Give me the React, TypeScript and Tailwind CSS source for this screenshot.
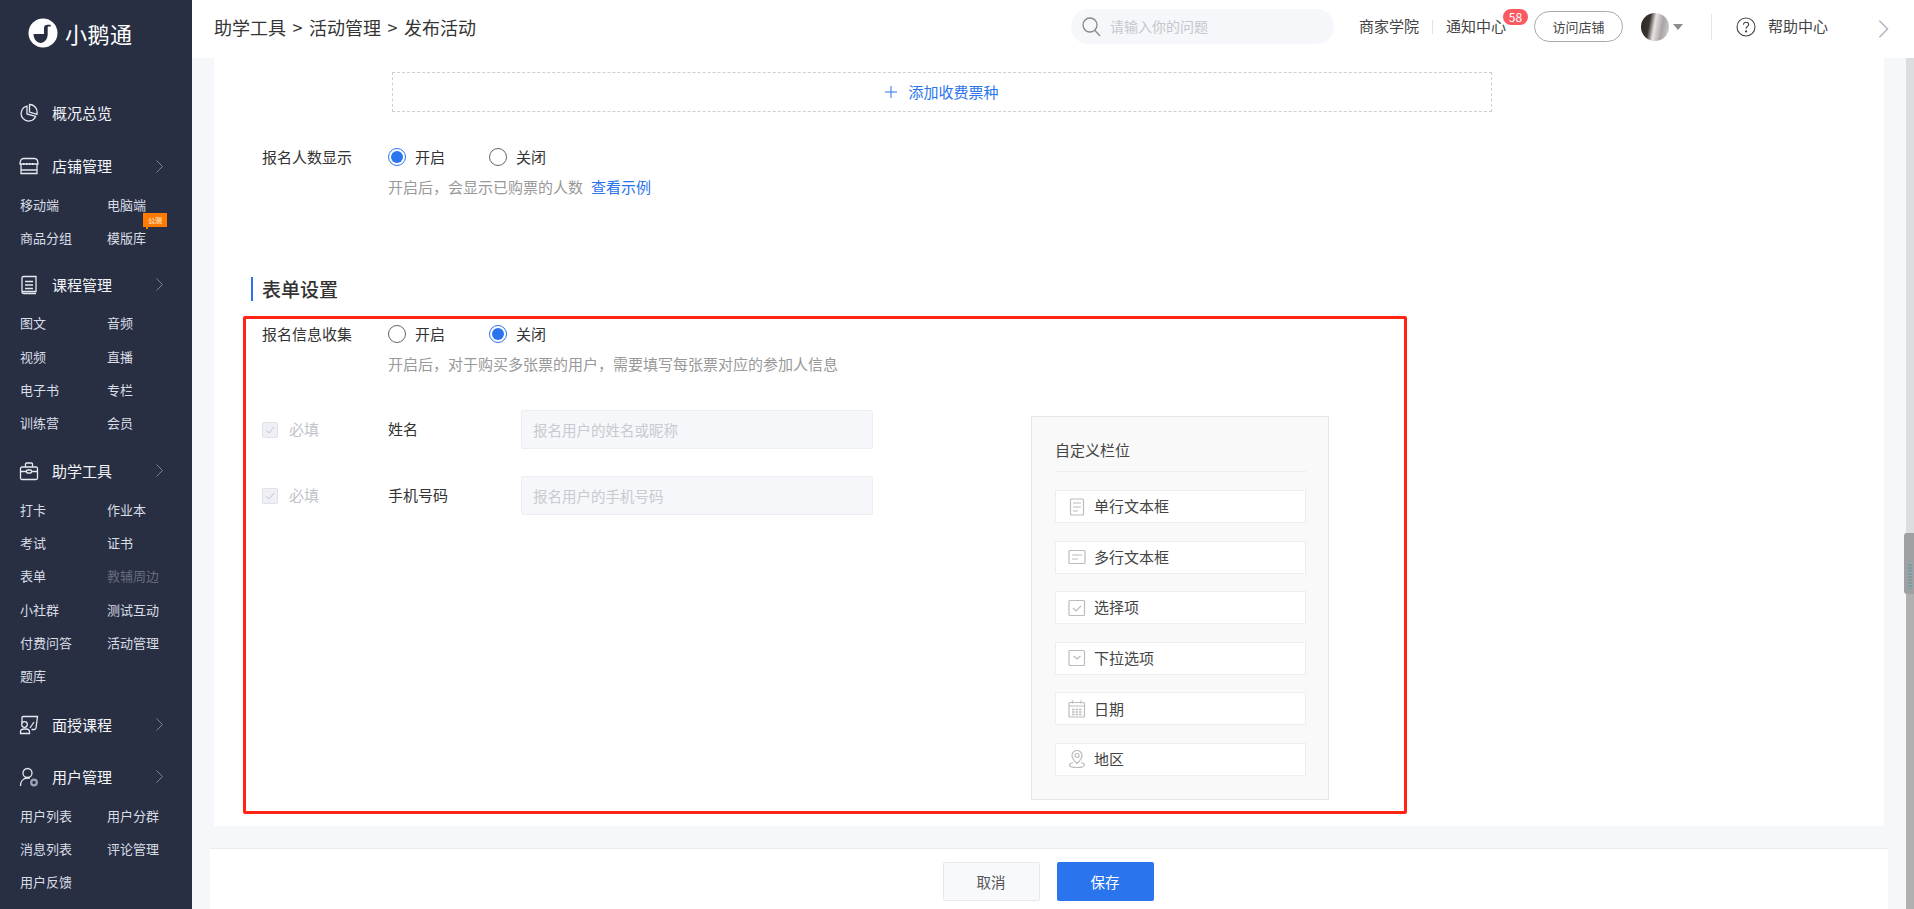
import React from "react";

const BLUE = "#2a75ed";

function Logo() {
  return (
    <svg width="30" height="30" viewBox="0 0 30 30" className="shrink-0">
      <circle cx="15" cy="15" r="14.5" fill="#fff" />
      <path d="M5.500 16H16v-6c0-2 1.500-3.200 3.500-3.200h3.200v1.700h-2c-.6 0-1 .4-1 1V16c0 5.500-3.500 9-7 9s-7.200-3.800-7.200-9z" fill="#282f43" />
    </svg>
  );
}

function NavIcon({ name }: { name: string }) {
  const s = { fill: "none", stroke: "#e6e9ef", strokeWidth: 1.3 } as const;
  return (
    <svg width="20" height="20" viewBox="0 0 20 20" className="shrink-0" {...s}>
      {name === "pie" && (
        <>
          <path d="M8 3.200a7.500 7.500 0 1 0 8.600 10.200L8 11z" />
          <path d="M10.500 1.500a7.600 7.600 0 0 1 7.600 7.800l-.1 2-7.500-2.200z" />
        </>
      )}
      {name === "store" && (
        <>
          <path d="M4.500 2.500h11c2 0 3.500 2 3.500 5.500H1c0-3.500 1.500-5.500 3.500-5.500z" />
          <path d="M2 8v9.500h16V8M2 14h16" />
          <path d="M4 8h12" strokeDasharray="1.500 1.500" strokeWidth="1.800" />
        </>
      )}
      {name === "book" && (
        <>
          <path d="M3 17V3c0-.8.4-1.500 1.500-1.500H17v15H4.500C3.500 16.500 3 17 3 17c0 1 .7 1.500 1.500 1.500H17" />
          <path d="M6 6.500h8M6 10h8M6 13.500h8" />
        </>
      )}
      {name === "case" && (
        <>
          <rect x="1.500" y="6" width="17" height="12.500" rx="1.500" />
          <path d="M6.500 6V3c0-.6.400-1 1-1h5c.6 0 1 .4 1 1v3M1.500 10.500h17" />
          <rect x="7.500" y="9" width="5" height="3" rx="1" fill="#282f43" />
        </>
      )}
      {name === "teach" && (
        <>
          <path d="M3 8V2.500c0-.6.400-1 1-1h14.500L17 13c-.1.900-.8 1.500-1.600 1.500H12.500" />
          <path d="M11 13l4-6" />
          <circle cx="5.500" cy="9.500" r="2.800" />
          <path d="M1.500 18.500v-1.500c0-2 1.500-3 3.500-3h2c2 0 3.500 1 3.500 3v1.500z" />
        </>
      )}
      {name === "user" && (
        <>
          <circle cx="8.500" cy="6" r="4.500" />
          <path d="M1.500 19c0-4.500 2.500-8 7-8 .8 0 1.500.1 2.200.4" />
          <circle cx="15" cy="15.500" r="2.800" strokeWidth="2.200" stroke="#9aa5b8" />
        </>
      )}
    </svg>
  );
}

function Chevron({ className = "", color = "#7d8494", w = 7, h = 13 }: { className?: string; color?: string; w?: number; h?: number }) {
  return (
    <svg width={w} height={h} viewBox="0 0 7 13" className={className} fill="none" stroke={color} strokeWidth="1">
      <path d="M.5.500l6 6-6 6" />
    </svg>
  );
}

type Item = { t: string; dim?: boolean; tag?: boolean };
type Sec = { icon: string; title: string; arrow?: boolean; items?: Item[]; mt: string };

const T = (...a: string[]): Item[] => a.map((t) => ({ t }));

const sections: Sec[] = [
  { icon: "pie", title: "概况总览", mt: "mt-[30px]" },
  {
    icon: "store",
    title: "店铺管理",
    arrow: true,
    mt: "mt-[19px]",
    items: [{ t: "移动端" }, { t: "电脑端" }, { t: "商品分组" }, { t: "模版库", tag: true }],
  },
  { icon: "book", title: "课程管理", arrow: true, mt: "mt-[13px]", items: T("图文", "音频", "视频", "直播", "电子书", "专栏", "训练营", "会员") },
  {
    icon: "case",
    title: "助学工具",
    arrow: true,
    mt: "mt-[14px]",
    items: [
      { t: "打卡" },
      { t: "作业本" },
      { t: "考试" },
      { t: "证书" },
      { t: "表单" },
      { t: "教辅周边", dim: true },
      { t: "小社群" },
      { t: "测试互动" },
      { t: "付费问答" },
      { t: "活动管理" },
      { t: "题库" },
    ],
  },
  { icon: "teach", title: "面授课程", arrow: true, mt: "mt-[15px]" },
  { icon: "user", title: "用户管理", arrow: true, mt: "mt-[18px]", items: T("用户列表", "用户分群", "消息列表", "评论管理", "用户反馈") },
];

function Sidebar() {
  return (
    <aside className="w-[192px] h-full shrink-0 bg-[#282f43] flex flex-col">
      <div className="h-[66px] flex items-center pl-[28px] gap-[7px]">
        <Logo />
        <span className="text-[22px] leading-[30px] text-white tracking-[0.5px]">小鹅通</span>
      </div>
      {sections.map((s) => (
        <section key={s.title} className={s.mt}>
          <div className="h-[34px] flex items-center pl-[19px] pr-[29px]">
            <NavIcon name={s.icon} />
            <span className="ml-[13px] flex-1 text-[15px] leading-[20px] text-[#f2f4f8]">{s.title}</span>
            {s.arrow && <Chevron />}
          </div>
          {s.items && (
            <ul className="mt-[5px] pl-[20px] grid grid-cols-[87px_1fr]">
              {s.items.map((i) => (
                <li key={i.t} className={`relative h-[33.33px] flex items-center text-[13px] leading-[18px] ${i.dim ? "text-[#666c7b]" : "text-[#d9dde5]"}`}>
                  {i.t}
                  {i.tag && (
                    <span className="absolute left-[36px] top-[-8px] w-[24px] h-[14px] bg-[#ff7a00] text-white text-[7px] leading-[14px] text-center">
                      公测
                      <span className="absolute left-[3px] top-[14px] w-[2px] h-[2px] bg-[#ff7a00]" />
                    </span>
                  )}
                </li>
              ))}
            </ul>
          )}
        </section>
      ))}
    </aside>
  );
}

function Header() {
  return (
    <header className="h-[58px] shrink-0 bg-white flex items-center pl-[22px] pb-[5px] text-[#333]">
      <div className="text-[18px] leading-[26px] text-[#353535] whitespace-nowrap w-[857px] [word-spacing:2.500px]">助学工具 &gt; 活动管理 &gt; 发布活动</div>
      <div className="w-[263px] h-[35px] rounded-full bg-[#f5f7fa] flex items-center pl-[11px] gap-[9px] shrink-0">
        <svg width="19" height="20" viewBox="0 0 19 20" fill="none" stroke="#888" strokeWidth="1.300">
          <circle cx="8" cy="8" r="7" />
          <path d="M13 13.500l5 5.500" />
        </svg>
        <span className="text-[14px] text-[#c4c7cd]">请输入你的问题</span>
      </div>
      <span className="ml-[25px] text-[15px] text-[#444] whitespace-nowrap">商家学院</span>
      <span className="ml-[13px] w-px h-[14px] bg-[#e3e3e3]" />
      <div className="relative ml-[13px] text-[15px] text-[#444] whitespace-nowrap">
        通知中心
        <span className="absolute left-[57px] -top-[6px] w-[25px] h-[16px] rounded-full bg-[#fb5a63] text-white text-[12px] leading-[16px] text-center">58</span>
      </div>
      <button className="ml-[28px] w-[89px] h-[31px] rounded-full border border-[#aaa] bg-white text-[13px] text-[#444]">访问店铺</button>
      <span className="ml-[18px] w-[28px] h-[28px] rounded-full bg-[linear-gradient(100deg,#2c2624_0%,#3a322e_30%,#e8e4e2_48%,#a9a3a3_72%,#d8d5d5_100%)]" />
      <svg width="10" height="6" viewBox="0 0 10 6" className="ml-[4px]">
        <path d="M0 0h10L5 6z" fill="#8d8d8d" />
      </svg>
      <span className="ml-[28px] w-px h-[26px] bg-[#e6e6e6]" />
      <svg width="20" height="20" viewBox="0 0 20 20" className="ml-[24px]" fill="none" stroke="#444" strokeWidth="1.100">
        <circle cx="10" cy="10" r="9" />
        <path d="M7.500 7.800c0-1.600 1.100-2.600 2.600-2.600s2.500 1 2.500 2.300c0 1.200-.8 1.700-1.500 2.300-.7.500-1 .9-1 2" />
        <circle cx="10.100" cy="14.400" r=".6" fill="#444" />
      </svg>
      <span className="ml-[12px] text-[15px] text-[#444] whitespace-nowrap">帮助中心</span>
      <Chevron className="ml-[50px] mt-[5px]" color="#b0b4bc" w={11} h={18} />
    </header>
  );
}

function Radio({ on, label, width }: { on: boolean; label: string; width: string }) {
  return (
    <label className={`flex items-center gap-[9px] ${width}`}>
      {on ? (
        <span className="w-[18px] h-[18px] rounded-full border border-[#2a75ed] flex items-center justify-center">
          <span className="w-[12px] h-[12px] rounded-full bg-[#2a75ed]" />
        </span>
      ) : (
        <span className="w-[18px] h-[18px] rounded-full border border-[#666] bg-white" />
      )}
      <span className="text-[15px] leading-[20px] text-[#333]">{label}</span>
    </label>
  );
}

function Row({ label, placeholder }: { label: string; placeholder: string }) {
  return (
    <div className="flex items-center h-[39px]">
      <span className="w-[16px] h-[16px] rounded-[2px] bg-[#eef0f5] border border-[#dfe2e9] flex items-center justify-center">
        <svg width="10" height="8" viewBox="0 0 10 8" fill="none" stroke="#c2c6ce" strokeWidth="1">
          <path d="M1 4l3 3 5-6" />
        </svg>
      </span>
      <span className="ml-[11px] w-[99px] text-[15px] text-[#c0c4cc]">必填</span>
      <span className="w-[133px] text-[15px] text-[#333]">{label}</span>
      <div className="w-[352px] h-[39px] rounded-[2px] bg-[#f5f7fa] border border-[#eceef2] flex items-center pl-[11px] text-[14.500px] text-[#c8cacf]">
        {placeholder}
      </div>
    </div>
  );
}

function FieldIcon({ name }: { name: string }) {
  return (
    <svg width="18" height="18" viewBox="0 0 18 18" fill="none" stroke="#bcbcbc" strokeWidth="1.200" className="shrink-0">
      {name === "single" && (
        <>
          <rect x="2.500" y="1" width="13" height="16" rx="1" />
          <path d="M5 5h8M5 9h8M5 13h5" />
        </>
      )}
      {name === "multi" && (
        <>
          <rect x="1" y="2.500" width="16" height="13" rx="1" />
          <path d="M4 7h10M4 11h6" />
        </>
      )}
      {name === "check" && (
        <>
          <rect x="1" y="1.500" width="15.500" height="15" rx="1" />
          <path d="M5 9l3 3 5-5" />
        </>
      )}
      {name === "drop" && (
        <>
          <rect x="1" y="1.500" width="15.500" height="15" rx="1" />
          <path d="M5.500 7l3.500 3 3.500-3" />
        </>
      )}
      {name === "date" && (
        <>
          <rect x="1" y="2.500" width="15.500" height="14.500" rx="1" />
          <path d="M1 6h15.500M4.500 .5v3M13 .5v3" />
          <path d="M4 9.500h9.500M4 12h9.500M4 14.500h9.500" strokeWidth="1.500" strokeDasharray="2.500 1" />
        </>
      )}
      {name === "pin" && (
        <>
          <path d="M9 13.500c-3-2.800-5-5-5-8a5 5 0 0 1 10 0c0 3-2 5.200-5 8z" />
          <circle cx="9" cy="5.500" r="2" />
          <path d="M5 12.500c-2 .6-3.500 1.500-3.500 2.500 0 1.500 3.200 2.500 7.500 2.500s7.500-1 7.500-2.500c0-1-1.500-1.900-3.500-2.500" />
        </>
      )}
    </svg>
  );
}

const fields = [
  ["single", "单行文本框"],
  ["multi", "多行文本框"],
  ["check", "选择项"],
  ["drop", "下拉选项"],
  ["date", "日期"],
  ["pin", "地区"],
];

function FieldPanel() {
  return (
    <div className="mt-[97px] ml-[158px] w-[298px] h-[384px] shrink-0 border border-[#e6e6e6] bg-[#f9f9f9] pl-[23px] pr-[22px]">
      <div className="h-[55px] border-b border-[#eeeeee] flex items-center pt-[13px] text-[15px] text-[#444]">自定义栏位</div>
      <ul className="mt-[18px] flex flex-col gap-[17.600px]">
        {fields.map(([icon, label]) => (
          <li key={label} className="h-[33px] bg-white border border-[#eeeeee] flex items-center pl-[12px] gap-[8px] text-[15px] text-[#444]">
            <FieldIcon name={icon} />
            {label}
          </li>
        ))}
      </ul>
    </div>
  );
}

function Main() {
  return (
    <div className="flex-1 min-w-0 h-full bg-[#f5f7fa] flex flex-col">
      <div className="ml-[22px] mr-[22px] h-[768px] shrink-0 bg-white overflow-hidden">
        <button className="mt-[14px] ml-[178px] w-[1100px] h-[40px] border border-dashed border-[#cfcfcf] flex items-center justify-center gap-[11px] text-[15px] text-[#2a75ed]">
          <svg width="12" height="12" viewBox="0 0 12 12" stroke={BLUE} strokeWidth="1">
            <path d="M6 0v12M0 6h12" />
          </svg>
          添加收费票种
        </button>
        <div className="mt-[35px] ml-[48px] flex items-center h-[20px]">
          <span className="w-[126px] text-[15px] leading-[20px] text-[#333]">报名人数显示</span>
          <Radio on label="开启" width="w-[101px]" />
          <Radio on={false} label="关闭" width="w-[100px]" />
        </div>
        <p className="mt-[10px] ml-[174px] text-[15px] leading-[20px] text-[#999]">
          开启后，会显示已购票的人数
          <span className="ml-[8px] text-[#2a75ed]">查看示例</span>
        </p>
        <div className="mt-[80px] ml-[37px] h-[24px] border-l-2 border-[#2a75ed] pl-[9px] text-[19px] leading-[24px] font-medium text-[#333]">表单设置</div>
        <div className="mt-[15px] ml-[29px] w-[1164px] h-[498px] rounded-[2px] border-[3px] border-[#ff2414] flex pl-[16px]">
          <div className="w-[611px] shrink-0">
            <div className="mt-[5px] flex items-center h-[20px]">
              <span className="w-[126px] text-[15px] leading-[20px] text-[#333]">报名信息收集</span>
              <Radio on={false} label="开启" width="w-[101px]" />
              <Radio on label="关闭" width="w-[100px]" />
            </div>
            <p className="mt-[10px] ml-[126px] text-[15px] leading-[20px] text-[#999] whitespace-nowrap">开启后，对于购买多张票的用户，需要填写每张票对应的参加人信息</p>
            <div className="mt-[36px] flex flex-col gap-[27px]">
              <Row label="姓名" placeholder="报名用户的姓名或昵称" />
              <Row label="手机号码" placeholder="报名用户的手机号码" />
            </div>
          </div>
          <FieldPanel />
        </div>
      </div>
      <footer className="mt-[22px] ml-[18px] mr-[18px] flex-1 bg-white border-t border-[#e9ecec] flex items-start justify-center gap-[17px] pt-[13px] pr-[2px]">
        <button className="w-[97px] h-[39px] rounded-[2px] border border-[#e6e8eb] bg-[#f8f9fb] text-[14.500px] text-[#555]">取消</button>
        <button className="w-[97px] h-[39px] rounded-[2px] bg-[#2a75ed] text-[14.500px] text-white">保存</button>
      </footer>
    </div>
  );
}

function Scrollbar() {
  return (
    <div className="w-[8px] h-full shrink-0 flex flex-col">
      <div className="h-[475px] bg-[#dcdde1]" />
      <div className="relative h-[61px] bg-[#a8aaad]">
        <div className="absolute -left-[2px] right-0 top-0 bottom-0 rounded-l-[3px] bg-[#9ea0a3]" />
        <div className="absolute left-[2px] top-[30px] w-[4px] h-[26px] bg-[repeating-linear-gradient(to_bottom,#7fb0bd_0px,#7fb0bd_1px,#8d9598_1px,#8d9598_3px)]" />
      </div>
      <div className="flex-1 bg-[#b0b0b0]" />
    </div>
  );
}

export default function App() {
  return (
    <div
      className="w-full h-[909px] flex overflow-hidden bg-white text-[14px]"
      style={{ fontFamily: '"Noto Sans CJK SC", "Noto Sans", sans-serif' }}
    >
      <Sidebar />
      <div className="flex-1 min-w-0 flex flex-col">
        <Header />
        <div className="flex-1 min-h-0 flex">
          <Main />
          <Scrollbar />
        </div>
      </div>
    </div>
  );
}
